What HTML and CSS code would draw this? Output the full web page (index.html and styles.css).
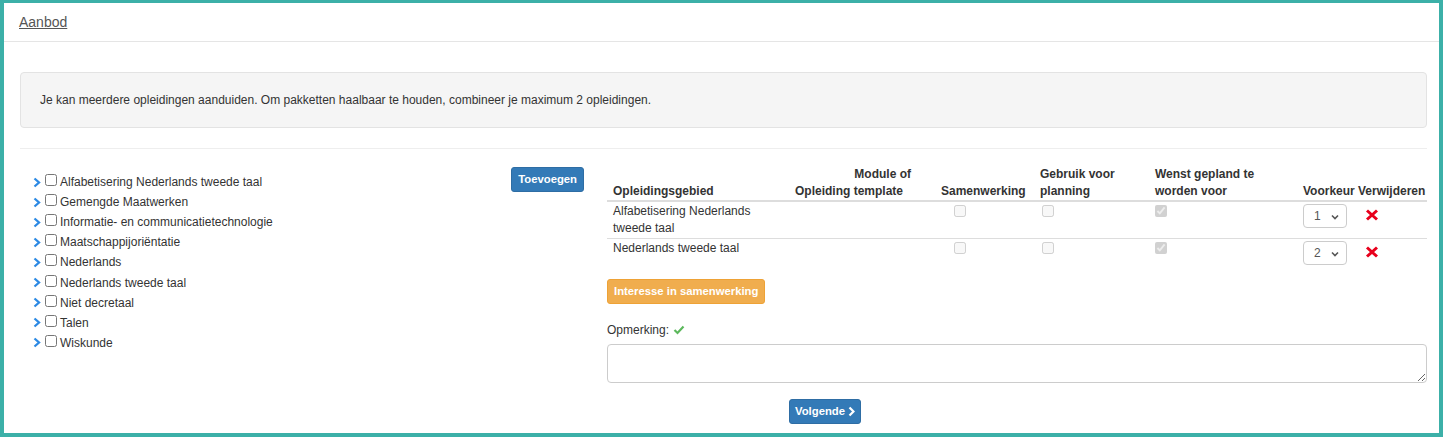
FILE: index.html
```html
<!DOCTYPE html>
<html lang="nl">
<head>
    <meta charset="UTF-8">
    <meta name="viewport" content="width=device-width, initial-scale=1.0">
    <title>Aanbod</title>
    <link rel="stylesheet" href="styles.css">
</head>
<body>
    <div class="frame">
        <div class="page-header">
            <a class="page-link" href="#">Aanbod</a>
        </div>

        <div class="content">
            <div class="info-box">
                Je kan meerdere opleidingen aanduiden. Om pakketten haalbaar te houden, combineer je maximum 2 opleidingen.
            </div>

            <div class="divider"></div>

            <div class="main">
                <!-- left: tree with opleidingsgebieden -->
                <div class="left-col">
                    <ul class="tree">
                        <li><svg class="chev" viewBox="0 0 8 11"><polyline points="1.5,1.5 6,5.5 1.5,9.5"/></svg><input type="checkbox"><span>Alfabetisering Nederlands tweede taal</span></li>
                        <li><svg class="chev" viewBox="0 0 8 11"><polyline points="1.5,1.5 6,5.5 1.5,9.5"/></svg><input type="checkbox"><span>Gemengde Maatwerken</span></li>
                        <li><svg class="chev" viewBox="0 0 8 11"><polyline points="1.5,1.5 6,5.5 1.5,9.5"/></svg><input type="checkbox"><span>Informatie- en communicatietechnologie</span></li>
                        <li><svg class="chev" viewBox="0 0 8 11"><polyline points="1.5,1.5 6,5.5 1.5,9.5"/></svg><input type="checkbox"><span>Maatschappijoriëntatie</span></li>
                        <li><svg class="chev" viewBox="0 0 8 11"><polyline points="1.5,1.5 6,5.5 1.5,9.5"/></svg><input type="checkbox"><span>Nederlands</span></li>
                        <li><svg class="chev" viewBox="0 0 8 11"><polyline points="1.5,1.5 6,5.5 1.5,9.5"/></svg><input type="checkbox"><span>Nederlands tweede taal</span></li>
                        <li><svg class="chev" viewBox="0 0 8 11"><polyline points="1.5,1.5 6,5.5 1.5,9.5"/></svg><input type="checkbox"><span>Niet decretaal</span></li>
                        <li><svg class="chev" viewBox="0 0 8 11"><polyline points="1.5,1.5 6,5.5 1.5,9.5"/></svg><input type="checkbox"><span>Talen</span></li>
                        <li><svg class="chev" viewBox="0 0 8 11"><polyline points="1.5,1.5 6,5.5 1.5,9.5"/></svg><input type="checkbox"><span>Wiskunde</span></li>
                    </ul>
                    <button class="btn btn-primary btn-add">Toevoegen</button>
                </div>

                <!-- right: selected opleidingen -->
                <div class="right-col">
                    <table class="choice-table">
                        <thead>
                            <tr>
                                <th class="c1">Opleidingsgebied</th>
                                <th class="c2">Module of<br><span class="c2-line">Opleiding template</span></th>
                                <th class="c3">Samenwerking</th>
                                <th class="c4">Gebruik voor planning</th>
                                <th class="c5">Wenst gepland te worden voor</th>
                                <th class="c6">Voorkeur</th>
                                <th class="c7">Verwijderen</th>
                            </tr>
                        </thead>
                        <tbody>
                            <tr>
                                <td class="c1">Alfabetisering Nederlands tweede taal</td>
                                <td class="c2"></td>
                                <td class="c3"><input type="checkbox" class="cb-samen" disabled></td>
                                <td class="c4"><input type="checkbox" class="cb-plan" disabled></td>
                                <td class="c5"><input type="checkbox" class="cb-wens" checked disabled></td>
                                <td class="c6">
                                    <div class="select-wrap">
                                        <select class="pref-select"><option selected>1</option><option>2</option></select>
                                        <svg class="select-chev" viewBox="0 0 8 6"><polyline points="1,1.5 4,4.5 7,1.5"/></svg>
                                    </div>
                                </td>
                                <td class="c7"><svg class="remove" viewBox="0 0 14 12"><path d="M2 1.5 L12 10.5 M12 1.5 L2 10.5"/></svg></td>
                            </tr>
                            <tr>
                                <td class="c1">Nederlands tweede taal</td>
                                <td class="c2"></td>
                                <td class="c3"><input type="checkbox" class="cb-samen" disabled></td>
                                <td class="c4"><input type="checkbox" class="cb-plan" disabled></td>
                                <td class="c5"><input type="checkbox" class="cb-wens" checked disabled></td>
                                <td class="c6">
                                    <div class="select-wrap">
                                        <select class="pref-select"><option>1</option><option selected>2</option></select>
                                        <svg class="select-chev" viewBox="0 0 8 6"><polyline points="1,1.5 4,4.5 7,1.5"/></svg>
                                    </div>
                                </td>
                                <td class="c7"><svg class="remove" viewBox="0 0 14 12"><path d="M2 1.5 L12 10.5 M12 1.5 L2 10.5"/></svg></td>
                            </tr>
                        </tbody>
                    </table>

                    <button class="btn btn-warning btn-samen">Interesse in samenwerking</button>

                    <div class="remark-label">
                        Opmerking:
                        <svg class="ok-check" viewBox="0 0 12 10"><polyline points="1.5,5 4.5,8 10.5,1.5"/></svg>
                    </div>
                    <textarea class="remark"></textarea>

                    <button class="btn btn-primary btn-next">Volgende <svg class="next-chev" viewBox="0 0 7 11"><polyline points="1.5,1.5 5.5,5.5 1.5,9.5"/></svg></button>
                </div>
            </div>
        </div>
    </div>
</body>
</html>
```

FILE: styles.css
```css
html, body {
    margin: 0;
    padding: 0;
}
body {
    font-family: "Liberation Sans", Arial, sans-serif;
    font-size: 12px;
    color: #333;
    background: #fff;
}
.frame {
    box-sizing: border-box;
    height: 437px;
    border-style: solid;
    border-color: #3cb0a8;
    border-width: 3px 4px 4px 4px;
    overflow: hidden;
}
.page-header {
    padding: 9px 15px 8px;
    line-height: 20px;
    border-bottom: 1px solid #e5e5e5;
}
.page-link {
    font-size: 14px;
    color: #555;
    text-decoration: underline;
}
.content {
    padding: 0 12px 0 16px;
}
.info-box {
    margin-top: 30px;
    padding: 19px;
    line-height: 16px;
    background: #f5f5f5;
    border: 1px solid #e3e3e3;
    border-radius: 4px;
}
.divider {
    margin-top: 20px;
    border-top: 1px solid #eee;
}
.main {
    display: flex;
    margin-top: 17px;
}
.left-col {
    width: 572px;
    flex-shrink: 0;
    display: flex;
    justify-content: space-between;
    align-items: flex-start;
}
.right-col {
    margin-left: 15px;
    flex: 1;
}
.tree {
    list-style: none;
    margin: 0;
    padding: 6px 0 0 13px;
}
.tree li {
    display: flex;
    align-items: center;
    height: 20.1px;
}
.chev {
    width: 8px;
    height: 11px;
    fill: none;
    stroke: #2d8ae4;
    stroke-width: 2.3;
}
.tree input {
    width: 12px;
    height: 12px;
    margin: 0 3px 0 4px;
    position: relative;
    top: -2px;
}
.btn {
    font-family: inherit;
    font-size: 11.3px;
    font-weight: bold;
    color: #fff;
    border: 1px solid transparent;
    border-radius: 3px;
    line-height: 15px;
    padding: 4px 6px;
    cursor: pointer;
}
.btn-primary {
    background: #337ab7;
    border-color: #2e6da4;
}
.btn-warning {
    background: #f0ad4e;
    border-color: #eea236;
}
.btn-add {
    margin: 1px 8px 0 0;
}
.choice-table {
    width: 820px;
    border-collapse: collapse;
    table-layout: fixed;
}
.choice-table th {
    text-align: left;
    vertical-align: bottom;
    font-weight: bold;
    line-height: 17px;
    padding: 0 3px 0 3px;
    border-bottom: 2px solid #ddd;
}
.choice-table td {
    vertical-align: top;
    line-height: 17px;
    padding: 1px 3px 1px 3px;
    border-bottom: 1px solid #ddd;
}
.choice-table tbody tr:last-child td {
    border-bottom: none;
}
.c1 { width: 166px; }
.choice-table .c1 { padding-left: 6px; }
.c2 { width: 126px; }
.choice-table th.c2 {
    text-align: right;
    padding-right: 27px;
}
.c2-line {
    margin-right: 8px;
}
.c3 { width: 96px; }
.choice-table .c3 { padding-right: 0; }
.c4 { width: 109px; }
.c5 { width: 142px; }
.c6 { width: 52px; }
.choice-table .c6 { padding-right: 0; }
.c7 { width: 66px; }
.choice-table input[type=checkbox] {
    width: 12px;
    height: 12px;
    margin: 2px 0 0 0;
}
.cb-samen { margin-left: 13px !important; }
.cb-plan { margin-left: 2px !important; }
.select-wrap {
    position: relative;
    width: 44px;
    height: 24px;
    margin: 1px 0 1px 0;
}
.pref-select {
    appearance: none;
    -webkit-appearance: none;
    box-sizing: border-box;
    width: 44px;
    height: 24px;
    padding: 0 0 0 10px;
    font-family: inherit;
    font-size: 12px;
    color: #555;
    background: #fff;
    border: 1px solid #ccc;
    border-radius: 4px;
}
.select-chev {
    position: absolute;
    right: 8px;
    top: 10px;
    width: 8px;
    height: 6px;
    fill: none;
    stroke: #555;
    stroke-width: 1.6;
    pointer-events: none;
}
.remove {
    display: block;
    width: 14px;
    height: 12px;
    margin: 6px 0 0 7px;
    fill: none;
    stroke: #e8001c;
    stroke-width: 3;
}
.btn-samen {
    margin-top: 12px;
    display: block;
}
.remark-label {
    margin-top: 19px;
    line-height: 14px;
    display: flex;
    align-items: center;
    gap: 4px;
}
.ok-check {
    width: 12px;
    height: 10px;
    fill: none;
    stroke: #5cb85c;
    stroke-width: 2.2;
}
.remark {
    display: block;
    box-sizing: border-box;
    width: 820px;
    height: 39px;
    margin-top: 7px;
    border: 1px solid #ccc;
    border-radius: 4px;
    font-family: inherit;
}
.btn-next {
    margin: 16px 0 0 182px;
    display: flex;
    align-items: center;
    gap: 3px;
    padding: 4px 5px;
}
.next-chev {
    width: 7px;
    height: 11px;
    fill: none;
    stroke: #fff;
    stroke-width: 2.2;
}
```
